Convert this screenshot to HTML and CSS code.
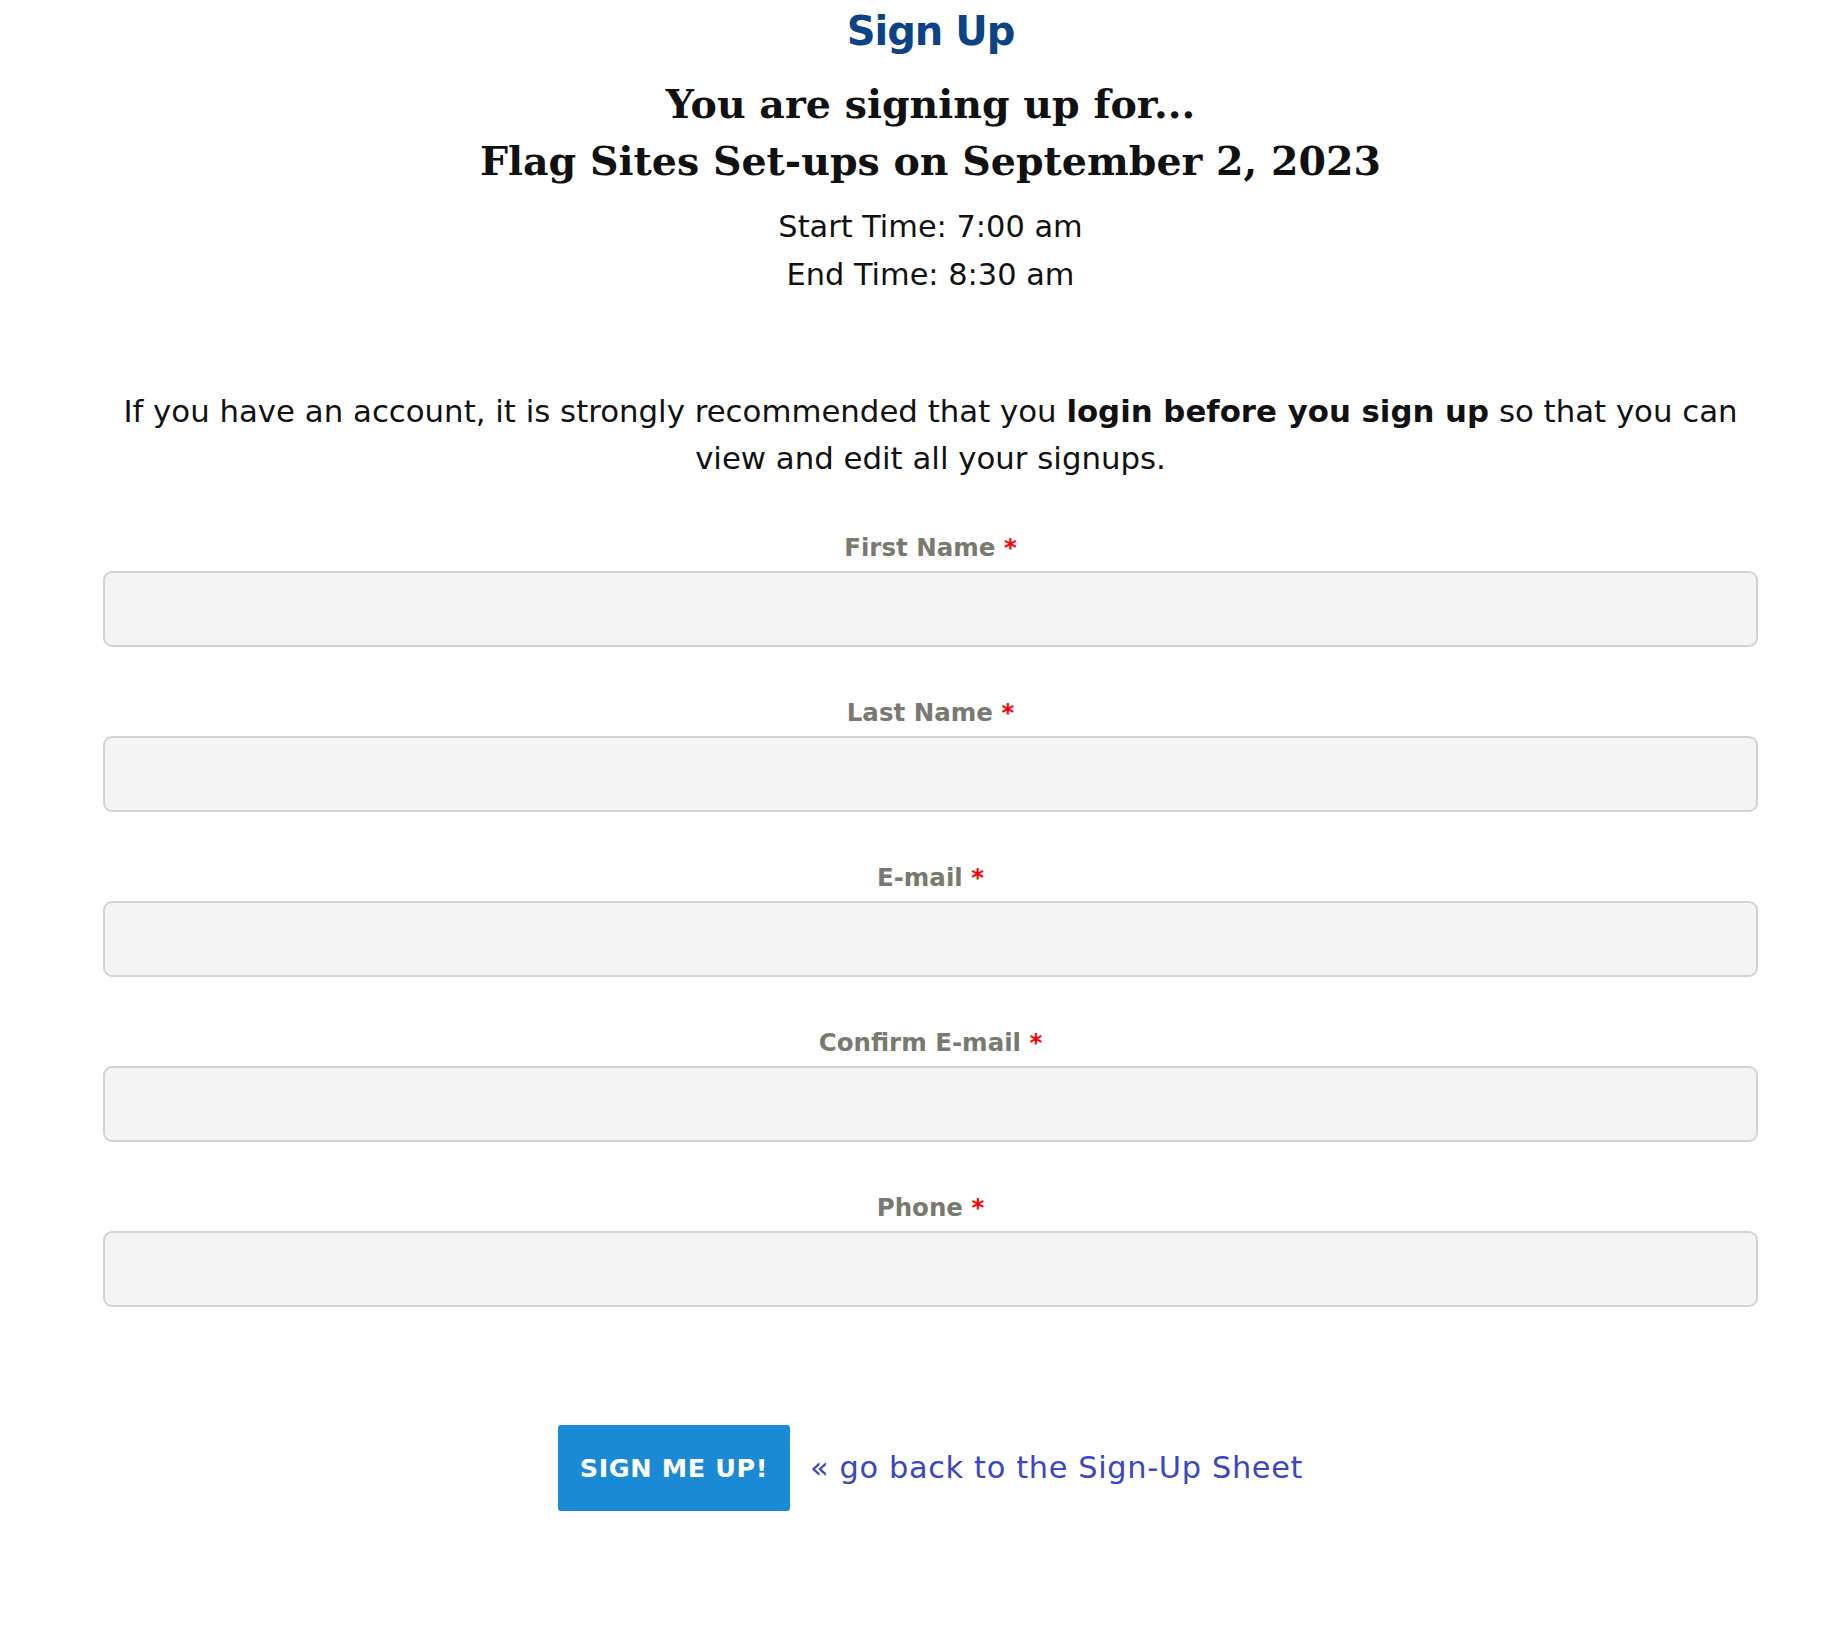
FILE: index.html
```html
<!DOCTYPE html>
<html lang="en">
<head>
<meta charset="utf-8">
<title>Sign Up</title>
<link rel="stylesheet" href="styles.css">
</head>
<body>
<main class="page">
  <h1 class="title">Sign Up</h1>
  <h2 class="event">You are signing up for...<br>Flag Sites Set-ups on September 2, 2023</h2>
  <p class="times">Start Time: 7:00 am<br>End Time: 8:30 am</p>
  <p class="notice">If you have an account, it is strongly recommended that you <strong>login before you sign up</strong> so that you can view and edit all your signups.</p>
  <form class="form">
    <div class="field">
      <label class="label" for="fn">First Name <span class="req">*</span></label>
      <input class="input" id="fn" type="text">
    </div>
    <div class="field">
      <label class="label" for="ln">Last Name <span class="req">*</span></label>
      <input class="input" id="ln" type="text">
    </div>
    <div class="field">
      <label class="label" for="em">E-mail <span class="req">*</span></label>
      <input class="input" id="em" type="text">
    </div>
    <div class="field">
      <label class="label" for="cem">Confirm E-mail <span class="req">*</span></label>
      <input class="input" id="cem" type="text">
    </div>
    <div class="field">
      <label class="label" for="ph">Phone <span class="req">*</span></label>
      <input class="input" id="ph" type="text">
    </div>
    <div class="actions">
      <button class="submit" type="button">Sign me up!</button>
      <a class="back" href="#">« go back to the Sign-Up Sheet</a>
    </div>
  </form>
</main>
</body>
</html>
```
FILE: styles.css
```css
html, body {
  margin: 0;
  padding: 0;
  background: #ffffff;
}
body {
  font-family: "DejaVu Sans", "Open Sans", sans-serif;
  color: #111111;
}
.page {
  padding: 3px 70px 0 103px;
  text-align: center;
}
.title {
  margin: 0;
  font-size: 40px;
  line-height: 56px;
  font-weight: 700;
  letter-spacing: -1px;
  color: #0b4385;
}
.event {
  margin: 17px 0 0;
  font-family: "DejaVu Serif", "Liberation Serif", serif;
  font-size: 39.5px;
  line-height: 57px;
  font-weight: 700;
  color: #111111;
}
.times {
  margin: 12.5px 0 0;
  font-size: 30.4px;
  line-height: 48px;
}
.notice {
  margin: 89.3px 0 0;
  font-size: 30.8px;
  line-height: 47px;
}
.notice strong {
  font-weight: 700;
}
.form {
  margin-top: 50.6px;
  display: flex;
  flex-direction: column;
}
.field {
  display: flex;
  flex-direction: column;
  margin-bottom: 50.5px;
}
.label {
  display: block;
  font-size: 24.5px;
  line-height: 32px;
  font-weight: 700;
  color: #797970;
  margin-bottom: 6.5px;
}
.req {
  color: #ff0000;
}
.input {
  box-sizing: border-box;
  width: 100%;
  height: 76px;
  margin: 0;
  background: #f4f4f4;
  border: 2px solid #d3d3d3;
  border-radius: 9px;
  font: inherit;
  padding: 0 16px;
}
.actions {
  margin-top: 67.5px;
  display: flex;
  justify-content: center;
  align-items: center;
  gap: 20px;
}
.submit {
  width: 232px;
  height: 86px;
  border: none;
  border-radius: 3px;
  background: #1b8ad4;
  color: #ffffff;
  font-family: "DejaVu Sans", sans-serif;
  font-size: 25.5px;
  font-weight: 700;
  letter-spacing: 0.6px;
  text-transform: uppercase;
  padding: 0;
}
.back {
  font-size: 30.4px;
  line-height: 48px;
  letter-spacing: 0.65px;
  color: #3a47c1;
  text-decoration: none;
}
```
